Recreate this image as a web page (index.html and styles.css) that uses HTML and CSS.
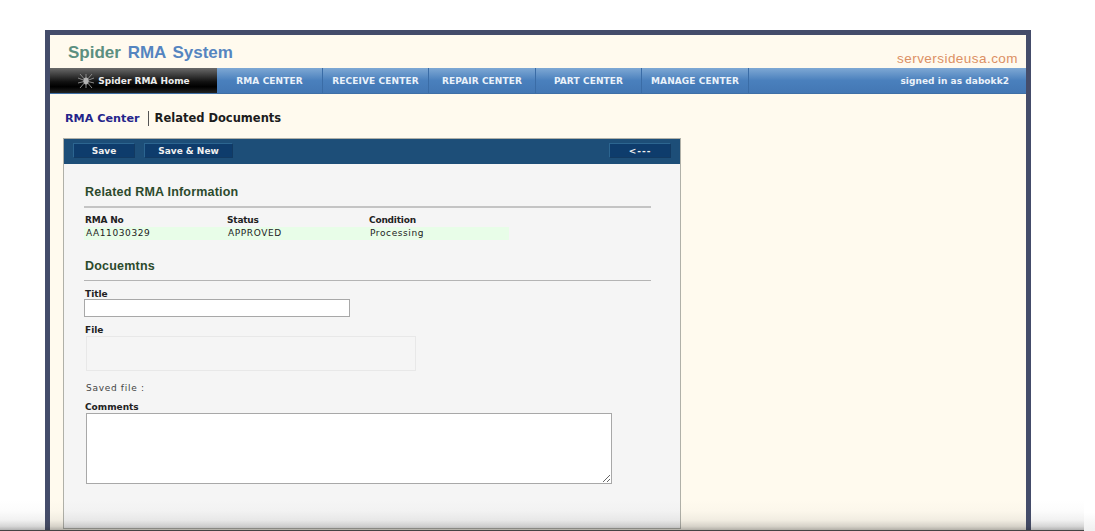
FILE: index.html
```html
<!DOCTYPE html>
<html lang="en">
<head>
  <meta charset="UTF-8" />
  <title>Spider RMA System</title>
  <link rel="stylesheet" href="styles.css">
</head>
<body>
  <div class="frame">
    <!-- Header -->
    <div class="header">
      <div class="header__logo"><span class="green">Spider</span> RMA System</div>
      <div class="header__site">serversideusa.com</div>
    </div>

    <!-- Navigation -->
    <div class="nav">
      <a class="nav__home">
        <svg class="nav__spider" width="18" height="16" viewBox="0 0 18 16">
          <g stroke="#8a8a8a" stroke-width="1" fill="none">
            <path d="M9 8L3 1M9 8L1 5M9 8L1 10M9 8L3 15M9 8L15 1M9 8L17 5M9 8L17 10M9 8L15 15M9 1V15"/>
          </g>
          <ellipse cx="9" cy="8" rx="2.6" ry="3.4" fill="#b4b4b4"/>
        </svg>
        Spider RMA Home
      </a>
      <a class="nav__item nav__item--rma">RMA CENTER</a>
      <a class="nav__item nav__item--receive">RECEIVE CENTER</a>
      <a class="nav__item nav__item--repair">REPAIR CENTER</a>
      <a class="nav__item nav__item--part">PART CENTER</a>
      <a class="nav__item nav__item--manage">MANAGE CENTER</a>
      <div class="nav__user">signed in as dabokk2</div>
    </div>

    <!-- Page title -->
    <div class="crumb">
      <span class="crumb__link">RMA Center</span>
      <span class="crumb__title">Related Documents</span>
    </div>

    <!-- Form panel -->
    <div class="panel">
      <div class="panel__bar">
        <button class="btn btn--save">Save</button>
        <button class="btn btn--new">Save &amp; New</button>
        <button class="btn btn--back">&lt;---</button>
      </div>
      <div class="panel__body">
        <h2 class="section section--info">Related RMA Information</h2>
        <div class="info">
          <div class="info__head">RMA No</div>
          <div class="info__head">Status</div>
          <div class="info__head">Condition</div>
          <div class="info__val">AA11030329</div>
          <div class="info__val">APPROVED</div>
          <div class="info__val">Processing</div>
        </div>

        <h2 class="section section--docs">Docuemtns</h2>
        <label class="field-label field-label--title">Title</label>
        <input class="title-input" type="text" />
        <label class="field-label field-label--file">File</label>
        <div class="file-box"></div>
        <div class="saved">Saved file :</div>
        <label class="field-label field-label--comments">Comments</label>
        <textarea class="comments"></textarea>
      </div>
    </div>
  </div>

  <!-- Shadow along the bottom of the window -->
  <div class="bottom-shade"></div>
</body>
</html>
```

FILE: styles.css
```css
html, body {
  margin: 0;
  height: 531px;
  overflow: hidden;
  background: #fff;
}
body {
  font-family: "DejaVu Sans", sans-serif;
  color: #222;
}
/* Outer frame */
.frame {
  width: 976px;
  height: 496px;
  margin: 30px 0 0 45px;
  border: 5px solid #444c6a;
  border-bottom: none;
  background: #fffaee;
}
/* Header */
.header {
  height: 33px;
  display: flex;
  justify-content: space-between;
  align-items: flex-end;
}
.header__logo {
  margin: 0 0 5px 18px;
  font: bold 17px "Liberation Sans", sans-serif;
  word-spacing: 2px;
  color: #5585c0;
}
.green { color: #5b8f80; }
.header__site {
  margin: 0 8px 2px 0;
  font: 13.5px "Liberation Sans", sans-serif;
  letter-spacing: 0.45px;
  color: #dc9064;
}
/* Navigation */
.nav {
  display: flex;
  height: 26px;
  background: linear-gradient(#7ea8d4, #4a80bd 50%, #4377b4);
  border-bottom: 1px solid #3f6fa6;
  box-sizing: border-box;
  font-size: 9px;
  font-weight: bold;
  color: #eaf2fa;
}
.nav a {
  display: flex;
  align-items: center;
  justify-content: center;
  box-sizing: border-box;
  padding-top: 1px;
}
.nav__home {
  width: 167px;
  gap: 2px;
  background: linear-gradient(#6a6a6a, #111 55%, #000 75%, #222);
  color: #ececec;
}
.nav__spider { margin-right: 1px; }
.nav__item {
  border-right: 1px solid #3a6ca6;
  letter-spacing: 0.1px;
}
.nav__item--rma { width: 106px; }
.nav__item--receive { width: 106px; }
.nav__item--repair { width: 107px; }
.nav__item--part { width: 106px; }
.nav__item--manage { width: 107px; }
.nav__user {
  margin-left: auto;
  padding-right: 17px;
  line-height: 27px;
  letter-spacing: 0.05px;
}
/* Title line */
.crumb {
  display: flex;
  align-items: center;
  height: 16px;
  margin: 16px 0 0 15px;
  font-weight: bold;
}
.crumb__link {
  font-size: 11.2px;
  color: #24248a;
  padding-right: 8px;
  border-right: 1px solid #555;
  line-height: 15px;
}
.crumb__title {
  font-size: 11.5px;
  padding-left: 6px;
  color: #1c1c1c;
}
/* Panel */
.panel {
  width: 616px;
  margin: 12px 0 0 13px;
  height: 389px;
  border: 1px solid #b0b0a8;
  background: #f5f5f5;
}
.panel__bar {
  display: flex;
  height: 25px;
  padding: 4px 9px 0;
  box-sizing: border-box;
  gap: 9px;
  background: #1d4e78;
}
.btn {
  height: 15px;
  padding: 0;
  border: 1px solid #2c6590;
  border-right-color: #123a62;
  border-bottom-color: #123a62;
  background: #0e3c6c;
  color: #f0f0f0;
  font: bold 9px "DejaVu Sans", sans-serif;
}
.btn--save { width: 62px; }
.btn--new { width: 89px; }
.btn--back { width: 62px; margin-left: auto; letter-spacing: 1px; }
.panel__body { padding: 0 0 0 20px; }
/* Section headings */
.section {
  width: 567px;
  margin: 0;
  padding-left: 1px;
  box-sizing: border-box;
  font: bold 12.5px "Liberation Sans", sans-serif;
  letter-spacing: 0.2px;
  color: #2c4a2c;
}
.section--info {
  padding-top: 21px;
  height: 44px;
  border-bottom: 2px solid #c4c4c4;
}
.section--docs {
  margin-top: 19px;
  height: 22px;
  border-bottom: 1px solid #b4b4b4;
}
/* RMA information */
.info {
  display: grid;
  grid-template-columns: 142px 142px 141px;
  margin-top: 6px;
  font-size: 9px;
}
.info__head {
  height: 13px;
  line-height: 13px;
  padding-left: 1px;
  font-weight: bold;
  letter-spacing: -0.2px;
}
.info__val {
  height: 13px;
  line-height: 13px;
  padding-left: 2px;
  background: #e8fde8;
  letter-spacing: 0.6px;
}
/* Form fields */
.field-label {
  display: block;
  font-size: 9px;
  font-weight: bold;
  line-height: 10px;
  color: #222;
}
.field-label--title { margin: 8px 0 0 1px; }
.field-label--file { margin: 8px 0 0 1px; }
.field-label--comments { margin: 8px 0 1px 1px; }
.title-input {
  display: block;
  width: 266px;
  height: 18px;
  margin: 0;
  box-sizing: border-box;
  border: 1px solid #a8a8a8;
  background: #fff;
  outline: none;
}
.file-box {
  width: 330px;
  height: 35px;
  margin: 1px 0 0 2px;
  box-sizing: border-box;
  border: 1px solid #e8e8e8;
}
.saved {
  margin: 12px 0 0 2px;
  font-size: 9px;
  line-height: 11px;
  letter-spacing: 0.7px;
  color: #444;
}
.comments {
  display: block;
  width: 526px;
  height: 71px;
  margin: 0 0 0 2px;
  padding: 0;
  box-sizing: border-box;
  border: 1px solid #a8a8a8;
  background: #fff;
  outline: none;
}
/* Fades the page out at the bottom edge */
.bottom-shade {
  position: absolute;
  left: 0;
  right: 11px;
  top: 500px;
  height: 31px;
  background: linear-gradient(rgba(60, 60, 60, 0), rgba(60, 60, 60, 0.015) 35%, rgba(60, 60, 60, 0.07) 65%, rgba(50, 50, 50, 0.2) 85%, rgba(40, 40, 40, 0.36) 96.7%, #444 96.7%);
  pointer-events: none;
}
.bottom-shade::after {
  content: '';
  position: absolute;
  top: 0;
  bottom: 0;
  right: -11px;
  width: 11px;
  background: linear-gradient(rgba(60, 60, 60, 0) 40%, rgba(60, 60, 60, 0.08));
}
```
